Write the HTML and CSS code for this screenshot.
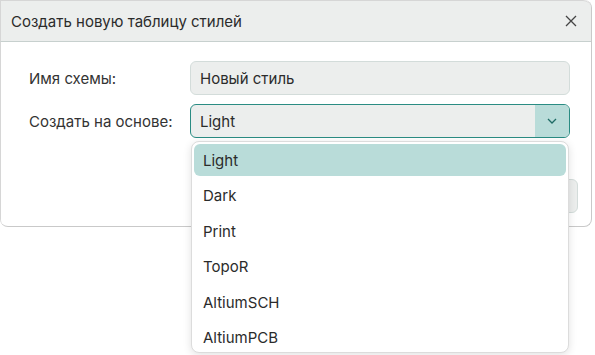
FILE: index.html
```html
<!DOCTYPE html>
<html lang="ru">
<head>
    <meta charset="UTF-8">
    <meta name="viewport" content="width=device-width, initial-scale=1.0">
    <title>Создать новую таблицу стилей</title>
    <link rel="stylesheet" href="styles.css">
</head>
<body>
    <div class="dialog">
        <div class="dialog-header">
            <span class="dialog-title">Создать новую таблицу стилей</span>
            <button class="close-btn" type="button" aria-label="Закрыть">
                <svg width="12" height="12" viewBox="0 0 12 12">
                    <path d="M1 1 L11 11 M11 1 L1 11" stroke="#444" stroke-width="1.3" fill="none"/>
                </svg>
            </button>
        </div>
        <div class="dialog-body">
            <div class="form-row">
                <label class="form-label" for="schemeName">Имя схемы:</label>
                <div class="text-input" id="schemeName">Новый стиль</div>
            </div>
            <div class="form-row">
                <label class="form-label">Создать на основе:</label>
                <div class="select">
                    <span class="select-value">Light</span>
                    <span class="select-arrow">
                        <svg width="10" height="6" viewBox="0 0 10 6">
                            <path d="M1 1 L5 5 L9 1" stroke="#1f6b65" stroke-width="1.3" fill="none"/>
                        </svg>
                    </span>
                </div>
            </div>
            <div class="dialog-footer">
                <button class="btn" type="button">OK</button>
            </div>
        </div>
    </div>

    <!-- Open dropdown of the base style select -->
    <ul class="dropdown">
        <li class="dropdown-item selected">Light</li>
        <li class="dropdown-item">Dark</li>
        <li class="dropdown-item">Print</li>
        <li class="dropdown-item">TopoR</li>
        <li class="dropdown-item">AltiumSCH</li>
        <li class="dropdown-item">AltiumPCB</li>
    </ul>
</body>
</html>
```

FILE: styles.css
```css
body {
    font-family: Inter, "Noto Sans", sans-serif;
    font-size: 15px;
    color: #2b2b2b;
    background-color: #fff;
    margin: 0;
    padding: 0;
}
.dialog {
    width: 592px;
    height: 227px;
    box-sizing: border-box;
    border: 1px solid #c9c9c9;
    border-top: none;
    border-left: none;
    border-radius: 0 8px 8px 8px;
    background-color: #fff;
    overflow: hidden;
}
.dialog-header {
    display: flex;
    align-items: center;
    justify-content: space-between;
    height: 40px;
    padding: 0 10px 0 10px;
    background-color: #eceeed;
    border-bottom: 1px solid #c7d0ce;
    border-left: 1px solid #d6d6d6;
    border-top: 1px solid #d6d6d6;
    border-radius: 0 8px 0 0;
}
.dialog-title {
    color: #2b2b2b;
}
.close-btn {
    display: flex;
    align-items: center;
    justify-content: center;
    width: 20px;
    height: 20px;
    padding: 0;
    border: none;
    background: none;
    cursor: pointer;
}
.dialog-body {
    display: flex;
    flex-direction: column;
    gap: 9px;
    padding: 19px 13px 0 28px;
    border-left: 1px solid #d6d6d6;
    height: 186px;
    box-sizing: border-box;
    border-bottom-left-radius: 8px;
}
.form-row {
    display: flex;
    align-items: center;
}
.form-label {
    width: 161px;
    color: #333;
}
.text-input {
    width: 380px;
    height: 34px;
    box-sizing: border-box;
    display: flex;
    align-items: center;
    padding: 0 9px;
    background-color: #eceeed;
    border: 1px solid #d3dcda;
    border-radius: 6px;
}
.select {
    width: 380px;
    height: 34px;
    box-sizing: border-box;
    display: flex;
    align-items: stretch;
    background-color: #eceeed;
    border: 1px solid #2a8c83;
    border-radius: 6px;
    overflow: hidden;
}
.select-value {
    flex: 1;
    display: flex;
    align-items: center;
    padding: 0 9px;
}
.select-arrow {
    width: 34px;
    display: flex;
    align-items: center;
    justify-content: center;
    background-color: #b9dcd9;
}
.dialog-footer {
    display: flex;
    justify-content: flex-end;
    margin-top: 32px;
}
.btn {
    height: 34px;
    padding: 0 24px;
    font-family: inherit;
    font-size: 14px;
    color: #2b2b2b;
    background-color: #eceeed;
    border: 1px solid #d3dcda;
    border-radius: 6px;
}
.dropdown {
    position: absolute;
    left: 191px;
    top: 141px;
    width: 378px;
    height: 212px;
    box-sizing: border-box;
    margin: 0;
    padding: 2px;
    list-style: none;
    display: flex;
    flex-direction: column;
    gap: 3.5px;
    background-color: #fff;
    border: 1px solid #dcdcdc;
    border-radius: 8px;
    box-shadow: 0 2px 8px rgba(0, 0, 0, 0.12);
    overflow: hidden;
}
.dropdown-item {
    flex: none;
    height: 32px;
    display: flex;
    align-items: center;
    padding: 0 9px;
    border-radius: 6px;
    color: #2b2b2b;
}
.dropdown-item.selected {
    background-color: #b9dcd9;
}
```
